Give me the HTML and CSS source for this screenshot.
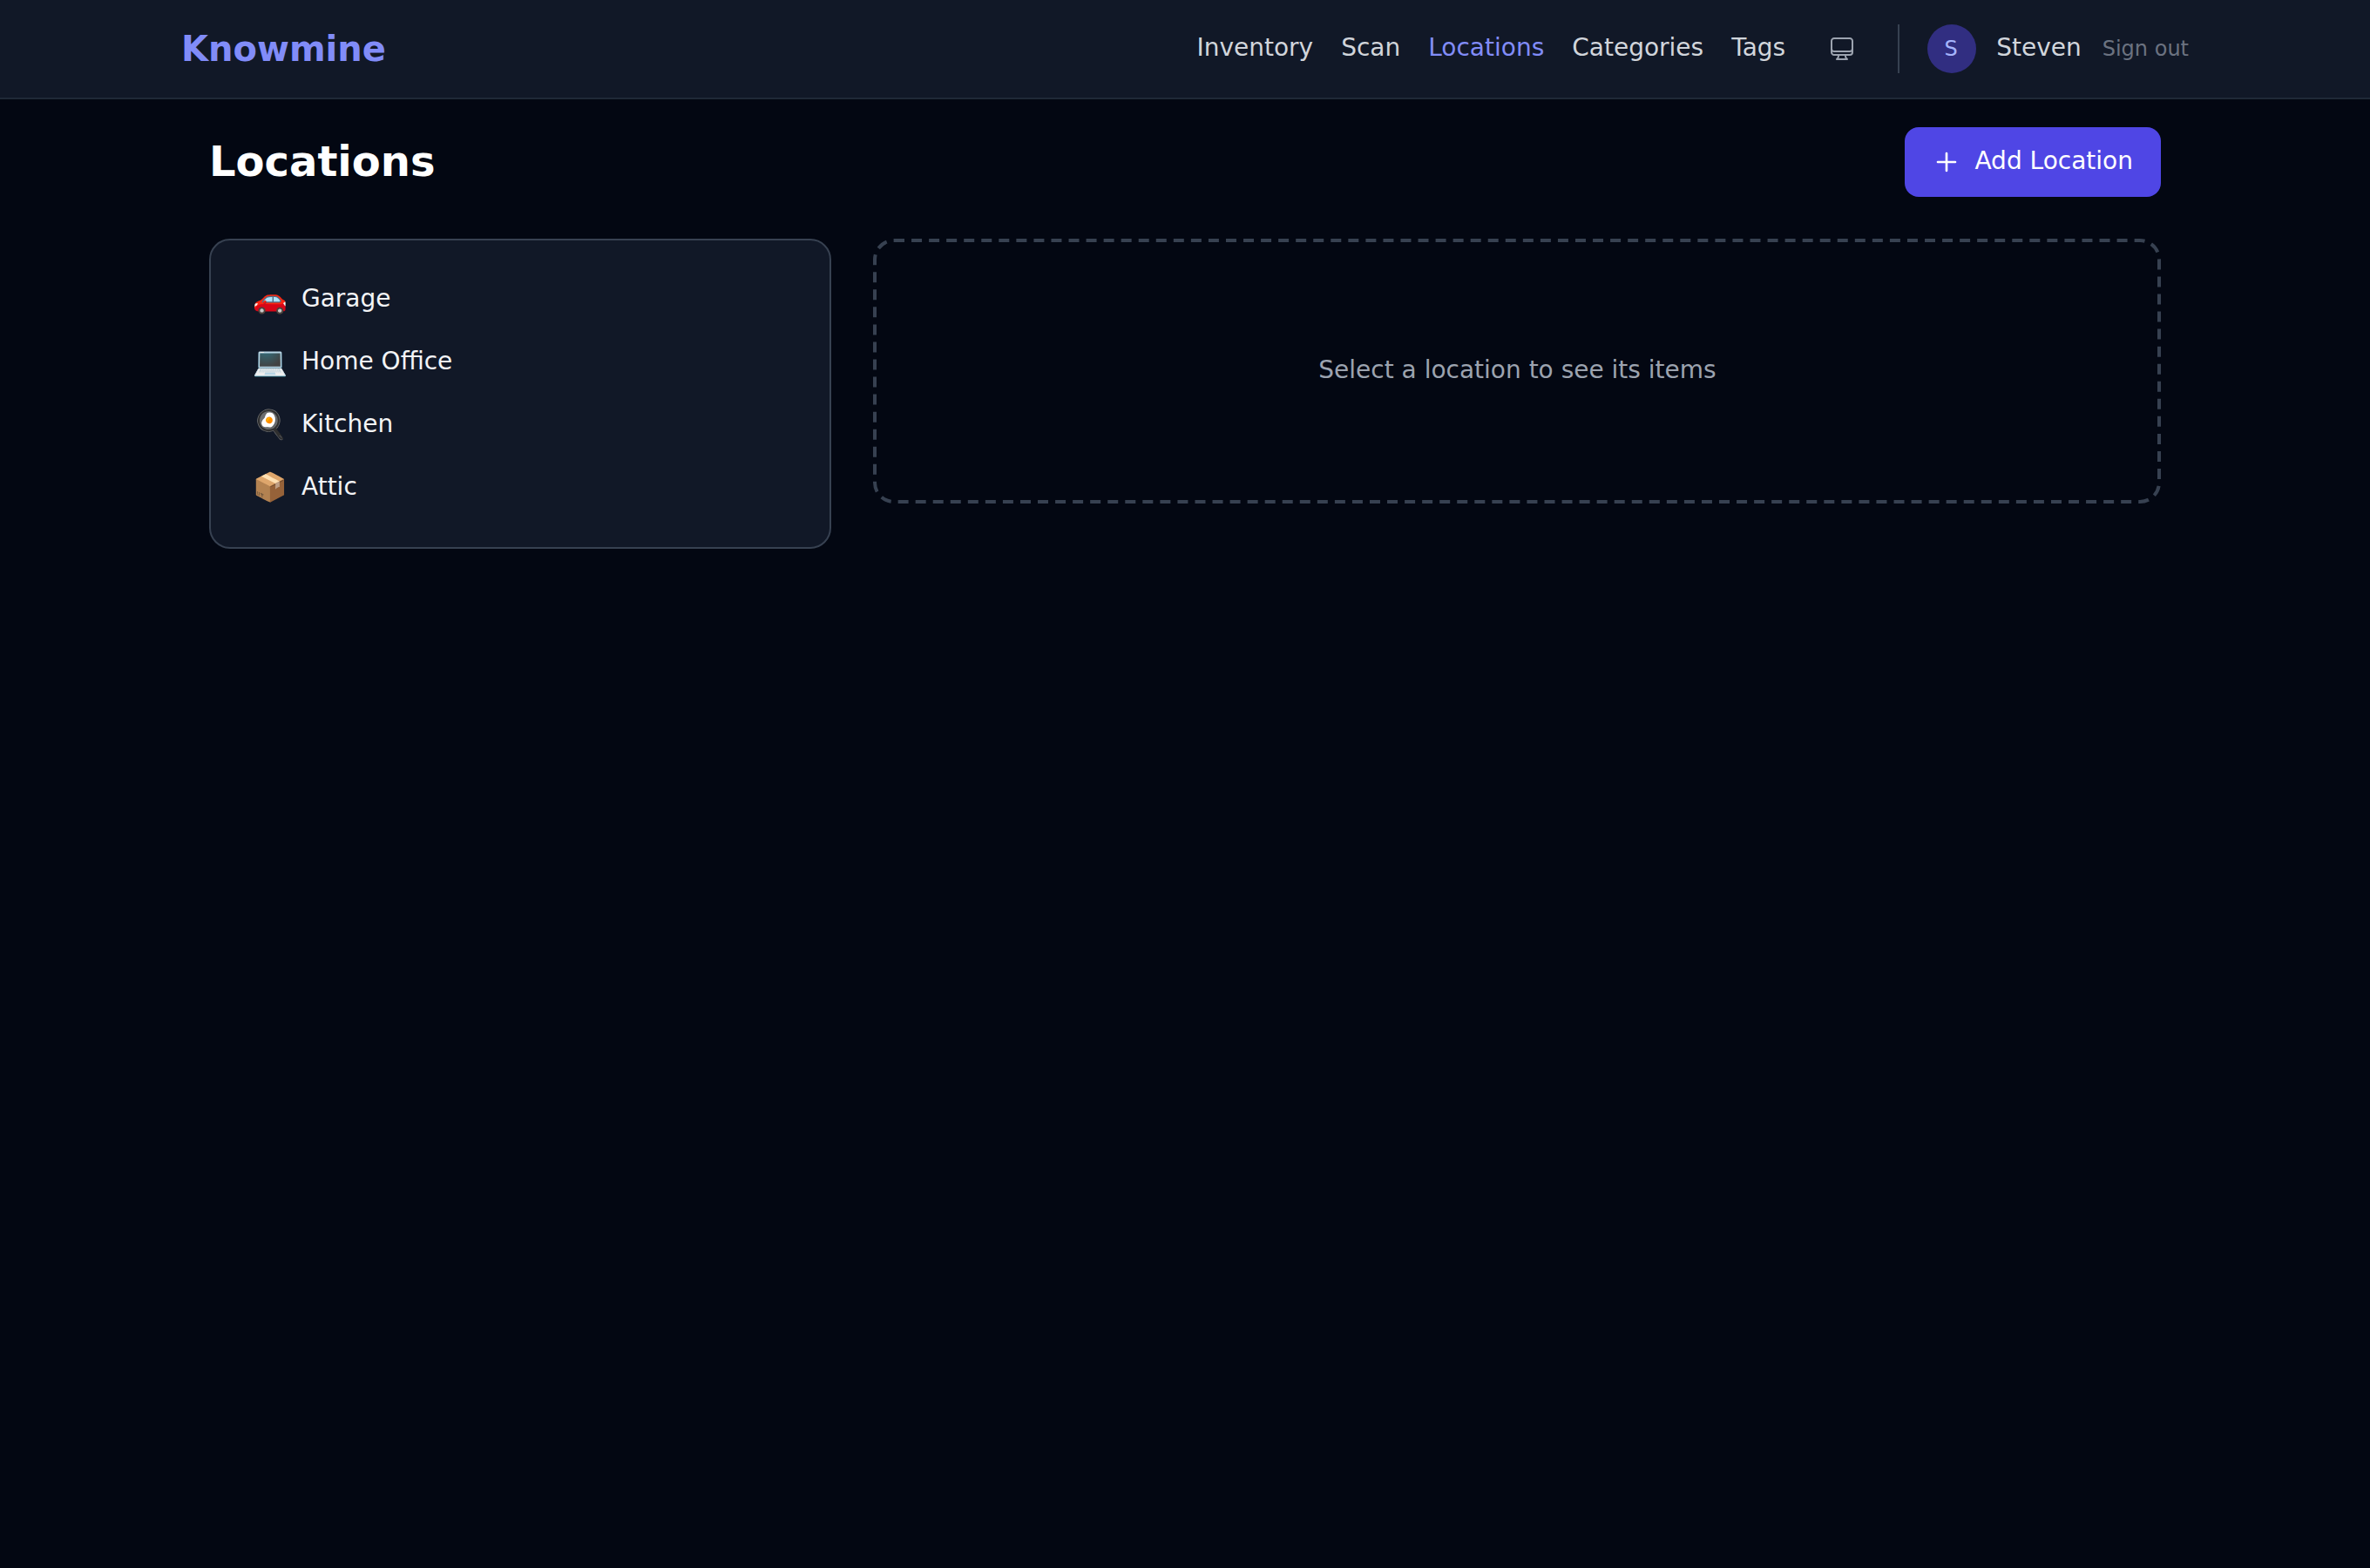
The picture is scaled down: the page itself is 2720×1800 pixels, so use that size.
FILE: index.html
```
<!DOCTYPE html>
<html lang="en">
<head>
    <meta charset="UTF-8">
    <meta name="viewport" content="width=device-width, initial-scale=1.0">
    <title>Locations - Knowmine</title>
    <link rel="stylesheet" href="styles.css">
</head>
<body>

    <nav class="navbar">
        <div class="nav-inner">
            <a class="brand" href="#">Knowmine</a>
            <div class="nav-links">
                <a class="label" href="#">Inventory</a>
                <a class="label" href="#">Scan</a>
                <a class="label active" href="#">Locations</a>
                <a class="label" href="#">Categories</a>
                <a class="label" href="#">Tags</a>
                <button class="theme-btn" aria-label="Theme">
                    <svg class="icon" viewBox="0 0 24 24">
                        <path d="M9 17.25v1.007a3 3 0 0 1-.879 2.122L7.5 21h9l-.621-.621A3 3 0 0 1 15 18.257V17.25m6-12V15a2.25 2.25 0 0 1-2.25 2.25H5.25A2.25 2.25 0 0 1 3 15V5.25m18 0A2.25 2.25 0 0 0 18.75 3H5.25A2.25 2.25 0 0 0 3 5.25m18 0V12a2.25 2.25 0 0 1-2.25 2.25H5.25A2.25 2.25 0 0 1 3 12V5.25"/>
                    </svg>
                </button>
                <div class="user">
                    <span class="avatar">S</span>
                    <span class="label">Steven</span>
                    <button class="sign-out">Sign out</button>
                </div>
            </div>
        </div>
    </nav>

    <main class="container">
        <div class="page-header">
            <h1>Locations</h1>
            <button class="add-btn">
                <svg class="icon icon-plus" viewBox="0 0 24 24">
                    <path d="M12 4.5v15m7.5-7.5h-15"/>
                </svg>
                <span class="label">Add Location</span>
            </button>
        </div>

        <div class="grid">
            <ul class="location-list">
                <li><span class="emoji">🚗</span><span class="label">Garage</span></li>
                <li><span class="emoji">💻</span><span class="label">Home Office</span></li>
                <li><span class="emoji">🍳</span><span class="label">Kitchen</span></li>
                <li><span class="emoji">📦</span><span class="label">Attic</span></li>
            </ul>
            <div class="empty">
                <!-- dashed outline -->
                <svg class="empty-border" viewBox="0 0 1478 304">
                    <rect x="2" y="2" width="1474" height="300" rx="22"/>
                </svg>
                <p class="label">Select a location to see its items</p>
            </div>
        </div>
    </main>

</body>
</html>
```
FILE: styles.css
```
* {
    box-sizing: border-box;
}

body {
    margin: 0;
    min-height: 100vh;
    font-family: 'DejaVu Sans', sans-serif;
    font-size: 28px;
    line-height: 40px;
    background: #030712;
    color: #f3f4f6;
}

a {
    color: inherit;
    text-decoration: none;
}

button {
    font: inherit;
    color: inherit;
    background: none;
    border: none;
    padding: 0;
    cursor: pointer;
}

.label {
    display: block;
    margin: 0;
    padding-bottom: 3px;
    line-height: 37px;
}

.icon {
    display: block;
    width: 32px;
    height: 32px;
    fill: none;
    stroke: currentColor;
    stroke-width: 1.5;
    stroke-linecap: round;
    stroke-linejoin: round;
}

.icon-plus {
    stroke-width: 2;
}

/* Navbar */
.navbar {
    background: #111827;
    border-bottom: 2px solid #1f2937;
}

.nav-inner {
    display: flex;
    align-items: center;
    justify-content: space-between;
    max-width: 2304px;
    height: 112px;
    margin: 0 auto;
}

.brand {
    font-size: 40px;
    line-height: 56px;
    font-weight: bold;
    color: #818cf8;
}

.nav-links {
    display: flex;
    align-items: center;
    gap: 32px;
    color: #d1d5db;
}

.nav-links .active {
    color: #818cf8;
}

.theme-btn {
    margin-left: 1px;
    padding: 16px;
    color: #9ca3af;
}

.user {
    display: flex;
    align-items: center;
    gap: 24px;
    padding-left: 32px;
    border-left: 2px solid #374151;
}

.avatar {
    display: flex;
    align-items: center;
    justify-content: center;
    width: 56px;
    height: 56px;
    margin-right: -1px;
    padding-right: 2px;
    border-radius: 50%;
    background: #312e81;
    color: #a5b4fc;
    font-size: 24px;
    line-height: 32px;
}

.sign-out {
    font-size: 24px;
    line-height: 32px;
    color: #6b7280;
}

/* Page */
.container {
    max-width: 2304px;
    margin: 0 auto;
    padding: 32px;
}

.page-header {
    display: flex;
    align-items: center;
    justify-content: space-between;
    margin-bottom: 48px;
}

h1 {
    margin: 0;
    padding-bottom: 2px;
    font-size: 48px;
    line-height: 62px;
    color: #fff;
}

.add-btn {
    display: flex;
    align-items: center;
    gap: 16px;
    padding: 20px 32px;
    border-radius: 16px;
    background: #4f46e5;
    color: #fff;
}

.grid {
    display: grid;
    grid-template-columns: 714px 1fr;
    gap: 48px;
    align-items: start;
}

.location-list {
    margin: 0;
    padding: 32px;
    list-style: none;
    background: #111827;
    border: 2px solid #374151;
    border-radius: 24px;
}

.location-list li {
    display: flex;
    align-items: center;
    gap: 16px;
    height: 72px;
    padding: 0 16px;
}

.emoji {
    padding-bottom: 2px;
    font-size: 32px;
    line-height: 46px;
}

.empty {
    position: relative;
    padding: 132px 132px 132px 133px;
    text-align: center;
    color: #9ca3af;
}

.empty-border {
    position: absolute;
    top: 0;
    left: 0;
    width: 100%;
    height: 100%;
    fill: none;
    stroke: #374151;
    stroke-width: 4;
    stroke-dasharray: 12 8.051;
}
```
